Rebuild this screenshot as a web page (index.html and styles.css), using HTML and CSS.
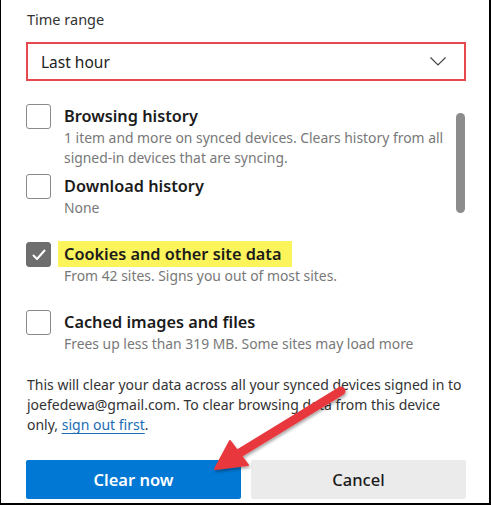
FILE: index.html
```html
<!DOCTYPE html>
<html lang="en">
<head>
  <meta charset="UTF-8" />
  <title>Clear browsing data</title>
  <link rel="stylesheet" href="styles.css">
</head>
<body>

<div class="dialog">
  <div class="field-label">Time range</div>
  <div class="select">
    <span>Last hour</span>
    <svg class="chevron" width="16" height="9" viewBox="0 0 16 9">
      <path d="M0.5 0.5 L8 8 L15.5 0.5" fill="none" stroke="#444" stroke-width="1.2"/>
    </svg>
  </div>

  <div class="list">
    <div class="items">
      <div class="item">
        <span class="box"></span>
        <div class="text">
          <div class="title">Browsing history</div>
          <div class="desc">1 item and more on synced devices. Clears history from all signed-in devices that are syncing.</div>
        </div>
      </div>
      <div class="item">
        <span class="box"></span>
        <div class="text">
          <div class="title">Download history</div>
          <div class="desc">None</div>
        </div>
      </div>
      <div class="item">
        <span class="box checked">
          <svg width="14" height="12" viewBox="0 0 14 12">
            <path d="M1.5 6.5 L5 10 L12.5 1.5" fill="none" stroke="#fff" stroke-width="2" stroke-linecap="round" stroke-linejoin="round"/>
          </svg>
        </span>
        <div class="text">
          <div class="title"><span class="highlight">Cookies and other site data</span></div>
          <div class="desc">From 42 sites. Signs you out of most sites.</div>
        </div>
      </div>
      <div class="item">
        <span class="box"></span>
        <div class="text">
          <div class="title">Cached images and files</div>
          <div class="desc">Frees up less than 319 MB. Some sites may load more</div>
        </div>
      </div>
    </div>
    <div class="scrollbar"><div class="thumb"></div></div>
  </div>

  <p class="note">
    This will clear your data across all your synced devices signed in to
    joefedewa@gmail.com. To clear browsing data from this device
    only, <a href="#">sign out first</a>.
  </p>

  <div class="actions">
    <button class="primary">Clear now</button>
    <button class="secondary">Cancel</button>
  </div>

  <!-- annotation arrow over the dialog -->
  <svg class="arrow" width="491" height="505" viewBox="0 0 491 505">
    <defs>
      <filter id="shadow" x="-20%" y="-20%" width="140%" height="140%">
        <feDropShadow dx="1" dy="2" stdDeviation="1.5" flood-color="#000" flood-opacity="0.35"/>
      </filter>
    </defs>
    <g filter="url(#shadow)" fill="#e9393e" stroke="#e9393e">
      <line x1="341" y1="391" x2="238" y2="454" stroke-width="9" stroke-linecap="round"/>
      <polygon points="215,469 230,441 248,465" stroke-width="2" stroke-linejoin="round"/>
    </g>
  </svg>
</div>

</body>
</html>
```

FILE: styles.css
```css
* {
  box-sizing: border-box;
  margin: 0;
  padding: 0;
}

body {
  background: #ffffff;
  font-family: 'Noto Sans', 'Open Sans', sans-serif;
}

.dialog {
  position: relative;
  width: 491px;
  height: 505px;
  padding: 9px 23px 0 25px;
  background: #ffffff;
  border-left: 1px solid #000;
  border-right: 2px solid #000;
  border-bottom: 2px solid #000;
  color: #1b1b1b;
}

.field-label {
  font-size: 14.5px;
  line-height: 20px;
  color: #333;
  padding-left: 1px;
}

.select {
  margin-top: 13px;
  height: 39px;
  border: 2px solid #e6484d;
  display: flex;
  align-items: center;
  justify-content: space-between;
  padding: 0 18px 0 13px;
  font-size: 15.5px;
  color: #222;
}

.chevron {
  display: block;
}

.list {
  display: flex;
  margin-top: 23px;
}

.items {
  flex: 1;
}

.item {
  display: flex;
  gap: 13px;
  min-height: 68px;
}

.item:first-child {
  min-height: 70px;
}

.item:last-child {
  min-height: 0;
}

.box {
  flex: none;
  width: 25px;
  height: 25px;
  border: 1px solid #8a8a8a;
  border-radius: 3px;
  display: flex;
  align-items: center;
  justify-content: center;
}

.box.checked {
  background: #6e6e6e;
  border-color: #6e6e6e;
}

.text {
  padding-right: 4px;
}

.title {
  font-size: 16.3px;
  line-height: 24px;
  font-weight: 600;
  color: #1b1b1b;
}

.highlight {
  background: #fbf45a;
  padding: 2px 10px 2px 6px;
  margin-left: -6px;
}

.desc {
  font-size: 13.9px;
  line-height: 20px;
  color: #787878;
}

.scrollbar {
  flex: none;
  width: 9px;
  margin-right: 1px;
}

.thumb {
  height: 100px;
  margin-top: 9px;
  background: #8c8c8c;
  border-radius: 5px;
}

.note {
  margin-top: 21px;
  font-size: 14px;
  line-height: 20px;
  color: #333;
  padding-left: 1px;
}

.note a {
  color: #1a6db5;
  text-decoration: underline;
  text-underline-offset: 3px;
}

.actions {
  display: flex;
  gap: 10px;
  margin-top: 25px;
}

.actions button {
  flex: 1;
  height: 39px;
  border: none;
  border-radius: 2px;
  font-family: inherit;
  font-size: 16.5px;
  font-weight: 600;
}

button.primary {
  background: #0078d4;
  color: #ffffff;
}

button.secondary {
  background: #ebebeb;
  color: #1b1b1b;
  font-weight: 500;
}

.arrow {
  position: absolute;
  top: 0;
  left: -1px;
  pointer-events: none;
}
```
